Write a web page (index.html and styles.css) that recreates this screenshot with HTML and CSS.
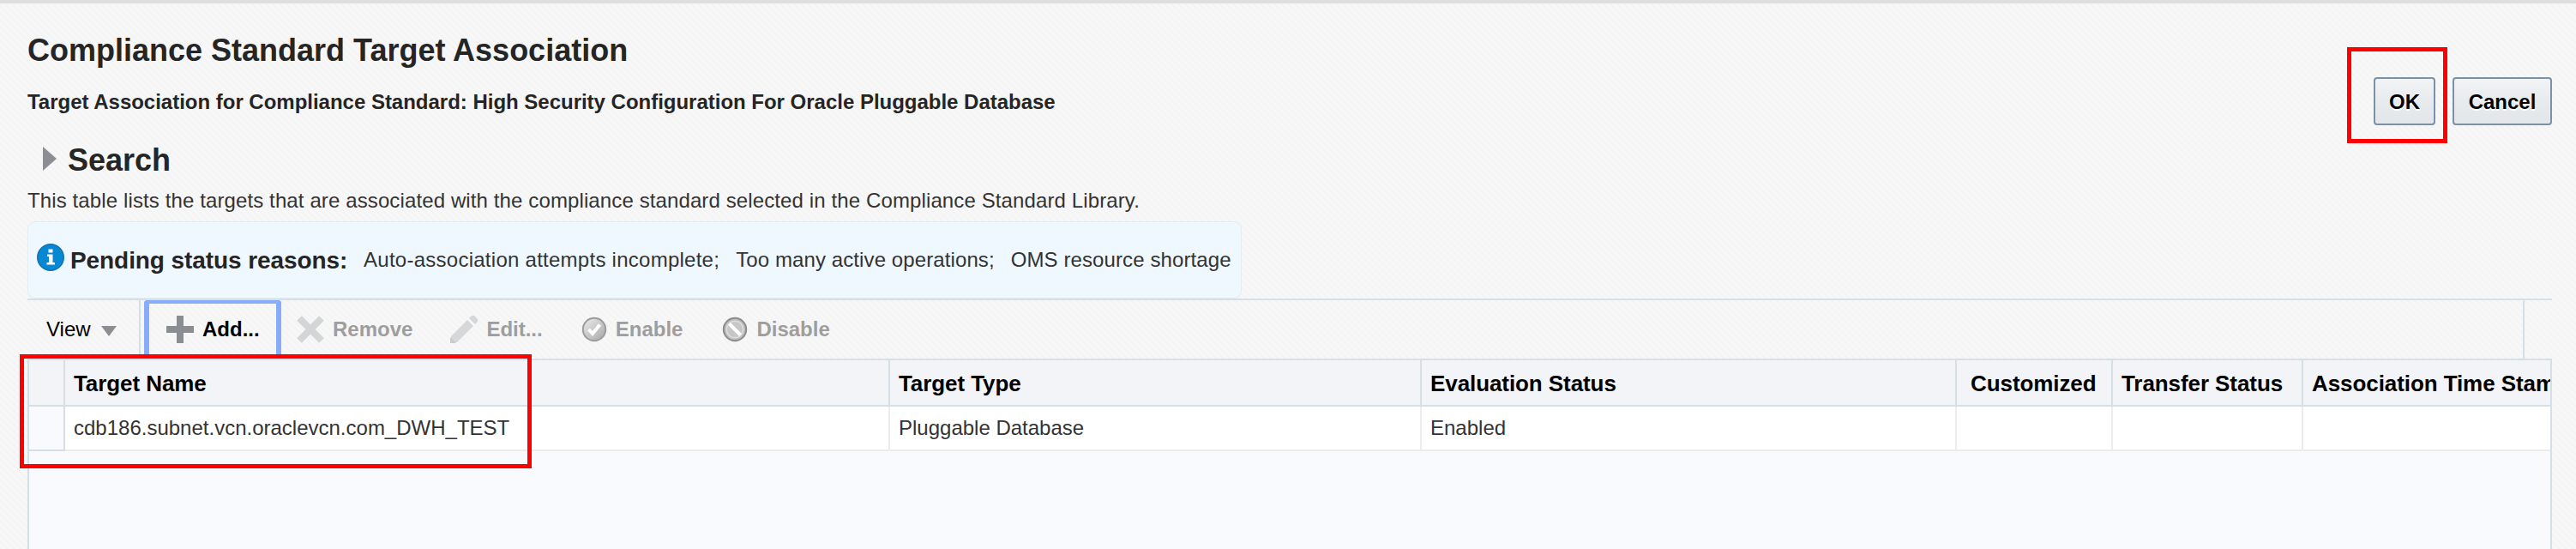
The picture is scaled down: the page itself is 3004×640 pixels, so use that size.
FILE: index.html
```html
<!DOCTYPE html>
<html lang="en">
<head>
<meta charset="utf-8">
<title>Compliance Standard Target Association</title>
<link rel="stylesheet" href="styles.css">
</head>
<body>
<main class="page">
  <header class="page-header">
    <div class="headings">
      <h1 class="title">Compliance Standard Target Association</h1>
      <p class="subtitle">Target Association for Compliance Standard: High Security Configuration For Oracle Pluggable Database</p>
    </div>
    <div class="actions">
      <button class="btn btn-ok">OK</button>
      <button class="btn btn-cancel">Cancel</button>
      <div class="callout callout-ok"></div>
    </div>
  </header>

  <div class="search">
    <svg class="disclosure" width="16" height="28" viewBox="0 0 16 28"><path d="M0 0L16 14L0 28z" fill="#8b8f93"/></svg>
    <h2 class="search-title">Search</h2>
  </div>

  <p class="description">This table lists the targets that are associated with the compliance standard selected in the Compliance Standard Library.</p>

  <div class="notice">
    <svg class="info" width="32" height="32" viewBox="0 0 32 32"><circle cx="16" cy="16" r="15.3" fill="#0887d3" stroke="#1272b0" stroke-width="1.4"/><path d="M13.5 6.5h5v4h-5zM12 12.5h6.5v9.5H21v2.5h-9.500V22H14v-7h-2z" fill="#fff"/></svg>
    <strong class="notice-title">Pending status reasons:</strong>
    <span class="reason reason-first">Auto-association attempts incomplete;</span>
    <span class="reason">Too many active operations;</span>
    <span class="reason">OMS resource shortage</span>
  </div>

  <section class="grid-panel">
    <div class="toolbar">
      <div class="menu">View
        <svg width="18" height="12" viewBox="0 0 18 12"><path d="M0 0H18L9 12z" fill="#8b8f93"/></svg>
      </div>
      <div class="tool tool-add">
        <svg width="32" height="32" viewBox="0 0 32 32"><path d="M12 0h8v12h12v8H20v12h-8V20H0v-8h12z" fill="#8a8e92"/></svg>
        Add...
      </div>
      <div class="tool tool-remove">
        <svg width="32" height="32" viewBox="0 0 32 32"><path d="M3 3L29 29M29 3L3 29" stroke="#d3d5d6" stroke-width="8"/></svg>
        Remove
      </div>
      <div class="tool tool-edit">
        <svg width="32" height="32" viewBox="0 0 32 32"><path d="M1 24L20 5L27 12L8 31H1z" fill="#d5d7d8"/><path d="M0 25L7 32H0z" fill="#c9cccd"/><path d="M22 3L25 0H28L32 4V7L29 10z" fill="#d5d7d8"/></svg>
        Edit...
      </div>
      <div class="tool tool-enable">
        <svg width="30" height="30" viewBox="0 0 30 30">
          <defs><linearGradient id="ball" x1="0" y1="0" x2="1" y2="1"><stop offset="0" stop-color="#ededed"/><stop offset="1" stop-color="#a6a6a6"/></linearGradient></defs>
          <circle cx="15" cy="15" r="13.200" fill="url(#ball)" stroke="#9c9c9c" stroke-width="2"/>
          <path d="M8.500 15L13 20L21.500 9.500" fill="none" stroke="#fff" stroke-width="4"/>
        </svg>
        Enable
      </div>
      <div class="tool tool-disable">
        <svg width="30" height="30" viewBox="0 0 30 30">
          <circle cx="15" cy="15" r="13.200" fill="#bdbdbd" stroke="#8c8c8c" stroke-width="2"/>
          <circle cx="15" cy="15" r="9.800" fill="#c6c6c6" stroke="#dedede" stroke-width="1.500"/>
          <path d="M8.500 8.500L21.500 21.500" stroke="#fff" stroke-width="4"/>
        </svg>
        Disable
      </div>
      <div class="toolbar-end"></div>
    </div>

    <div class="table">
      <div class="row head">
        <div class="cell"></div>
        <div class="cell">Target Name</div>
        <div class="cell">Target Type</div>
        <div class="cell">Evaluation Status</div>
        <div class="cell cell-center">Customized</div>
        <div class="cell">Transfer Status</div>
        <div class="cell">Association Time Stamp</div>
      </div>
      <div class="row data">
        <div class="cell"></div>
        <div class="cell">cdb186.subnet.vcn.oraclevcn.com_DWH_TEST</div>
        <div class="cell">Pluggable Database</div>
        <div class="cell">Enabled</div>
        <div class="cell"></div>
        <div class="cell"></div>
        <div class="cell"></div>
      </div>
    </div>
    <div class="callout callout-target"></div>
  </section>
</main>
</body>
</html>
```
FILE: styles.css
```css
* {
  box-sizing: border-box;
}

body {
  margin: 0;
  font: 24px/28px "Liberation Sans", Arial, sans-serif;
  color: #333;
}

h1, h2, p {
  margin: 0;
}

.page {
  display: flex;
  flex-direction: column;
  height: 640px;
  padding: 34px 28px 0 32px;
  overflow: hidden;
  border-top: 4px solid #dedede;
  background: repeating-linear-gradient(45deg, #f4f4f4 0, #f5f5f5 2px, #f8f8f8 3.500px, #f8f8f8 4.500px, #f4f4f4 5.657px);
}

.page-header {
  display: flex;
  justify-content: space-between;
  height: 128px;
}

.title,
.search-title {
  font-size: 36px;
  line-height: 42px;
  font-weight: bold;
  color: #252525;
}

.subtitle {
  margin-top: 25px;
  font-weight: bold;
  letter-spacing: -0.015px;
  color: #252525;
}

.actions {
  position: relative;
  display: flex;
  gap: 20px;
  padding-top: 52px;
}

.btn {
  height: 56px;
  padding: 1px 0 0;
  border: 2px solid #7a91a7;
  border-radius: 4px;
  background: linear-gradient(#f2f3f5, #e7ebed 50%, #e2e6e8);
  font: bold 24px/28px "Liberation Sans", Arial, sans-serif;
  color: #000;
  text-shadow: 0 2px 0 #fff;
}

.btn-ok {
  width: 72px;
}

.btn-cancel {
  width: 116px;
}

.callout {
  position: absolute;
  border: 5px solid #f00;
}

.callout-ok {
  left: -31px;
  top: 17px;
  width: 117px;
  height: 112px;
}

.search {
  display: flex;
  height: 54px;
  padding-left: 18px;
}

.disclosure {
  margin-top: 5px;
}

.search-title {
  margin-left: 13px;
}

.description {
  letter-spacing: 0.115px;
}

.notice {
  display: flex;
  width: 1416px;
  height: 90px;
  flex: none;
  margin-top: 10px;
  padding: 0 9px;
  border: 1px solid #e0edf3;
  border-radius: 9px;
  background: #eff7ff;
  white-space: nowrap;
}

.info {
  flex: none;
  margin: 25px 0 0 1px;
}

.notice-title {
  width: 324px;
  margin: 29px 0 0 7px;
  font-size: 28px;
  line-height: 32px;
  letter-spacing: -0.080px;
  color: #252525;
}

.reason {
  margin: 30px 0 0 19px;
  letter-spacing: 0.100px;
}

.reason-first {
  margin-left: 18px;
  letter-spacing: 0.260px;
}

.grid-panel {
  position: relative;
  flex: 1;
  display: flex;
  flex-direction: column;
  width: 2944px;
}

.toolbar {
  display: flex;
  height: 70px;
  border-top: 2px solid #d6dfe6;
}

.menu {
  display: flex;
  align-items: center;
  width: 132px;
  padding-left: 22px;
  border-right: 2px solid #d6dfe6;
  color: #000;
}

.menu svg {
  margin: 4px 0 0 12px;
}

.tool {
  display: flex;
  align-items: center;
  gap: 10px;
  font-weight: bold;
  color: #9e9e9e;
}

.tool-add {
  width: 160px;
  margin-left: 4px;
  padding: 0 0 4px 20px;
  border: solid #88acf7;
  border-width: 4px 6px 0;
  border-radius: 4px 4px 0 0;
  color: #000;
}

.tool-remove {
  margin-left: 18px;
}

.tool-edit {
  margin-left: 44px;
}

.tool-enable {
  margin-left: 45px;
}

.tool-disable {
  margin-left: 46px;
}

.toolbar-end {
  width: 34px;
  margin-left: auto;
  border-left: 2px solid #d6dfe6;
}

.table {
  flex: 1;
  border: solid #d6dfe6;
  border-width: 2px 2px 0;
  background: #f8fafd;
  overflow: hidden;
}

.row {
  display: grid;
  grid-template-columns: 42px 962px 620px 624px 182px 222px 288px;
}

.cell {
  display: flex;
  align-items: center;
  padding-left: 10px;
  border-right: 2px solid #ececec;
  border-bottom: 2px solid #ececec;
  white-space: nowrap;
  overflow: hidden;
}

.cell:last-child {
  border-right: 0;
}

.head .cell {
  height: 54px;
  padding-top: 2px;
  border-color: #d6dfe6;
  background: #f2f4f8;
  font-size: 26px;
  font-weight: bold;
  letter-spacing: -0.080px;
  color: #000;
}

.head .cell-center {
  padding-left: 16px;
}

.data .cell {
  height: 52px;
  background: #fff;
}

.data .cell:first-child {
  border-color: #d6dfe6;
  background: #f8fafd;
}

.callout-target {
  left: -9px;
  top: 65px;
  width: 597px;
  height: 133px;
}
```
